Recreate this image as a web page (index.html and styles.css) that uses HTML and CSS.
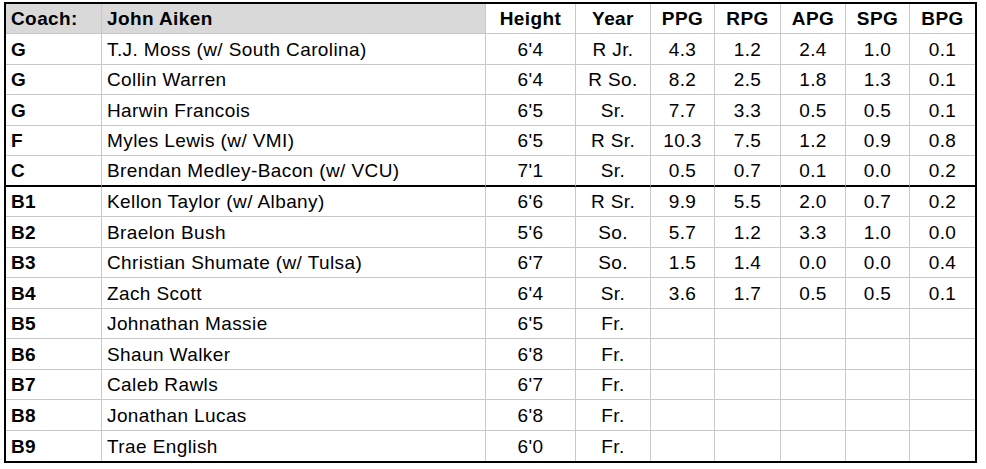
FILE: index.html
```html
<!DOCTYPE html>
<html lang="en">
<head>
<meta charset="utf-8">
<title>Roster</title>
<link rel="stylesheet" href="styles.css">
</head>
<body>
<table class="roster">
  <colgroup>
    <col class="c-pos"><col class="c-name"><col class="c-ht"><col class="c-yr">
    <col class="c-ppg"><col class="c-rpg"><col class="c-apg"><col class="c-spg"><col class="c-bpg">
  </colgroup>
  <thead>
    <tr>
      <th class="lbl">Coach:</th><th class="lbl">John Aiken</th><th>Height</th><th>Year</th>
      <th>PPG</th><th>RPG</th><th>APG</th><th>SPG</th><th>BPG</th>
    </tr>
  </thead>
  <tbody>
    <tr><td class="pos">G</td><td class="name">T.J. Moss (w/ South Carolina)</td><td>6'4</td><td>R Jr.</td><td>4.3</td><td>1.2</td><td>2.4</td><td>1.0</td><td>0.1</td></tr>
    <tr><td class="pos">G</td><td class="name">Collin Warren</td><td>6'4</td><td>R So.</td><td>8.2</td><td>2.5</td><td>1.8</td><td>1.3</td><td>0.1</td></tr>
    <tr><td class="pos">G</td><td class="name">Harwin Francois</td><td>6'5</td><td>Sr.</td><td>7.7</td><td>3.3</td><td>0.5</td><td>0.5</td><td>0.1</td></tr>
    <tr><td class="pos">F</td><td class="name">Myles Lewis (w/ VMI)</td><td>6'5</td><td>R Sr.</td><td>10.3</td><td>7.5</td><td>1.2</td><td>0.9</td><td>0.8</td></tr>
    <tr class="group-end"><td class="pos">C</td><td class="name">Brendan Medley-Bacon (w/ VCU)</td><td>7'1</td><td>Sr.</td><td>0.5</td><td>0.7</td><td>0.1</td><td>0.0</td><td>0.2</td></tr>
    <tr><td class="pos">B1</td><td class="name">Kellon Taylor (w/ Albany)</td><td>6'6</td><td>R Sr.</td><td>9.9</td><td>5.5</td><td>2.0</td><td>0.7</td><td>0.2</td></tr>
    <tr><td class="pos">B2</td><td class="name">Braelon Bush</td><td>5'6</td><td>So.</td><td>5.7</td><td>1.2</td><td>3.3</td><td>1.0</td><td>0.0</td></tr>
    <tr><td class="pos">B3</td><td class="name">Christian Shumate (w/ Tulsa)</td><td>6'7</td><td>So.</td><td>1.5</td><td>1.4</td><td>0.0</td><td>0.0</td><td>0.4</td></tr>
    <tr><td class="pos">B4</td><td class="name">Zach Scott</td><td>6'4</td><td>Sr.</td><td>3.6</td><td>1.7</td><td>0.5</td><td>0.5</td><td>0.1</td></tr>
    <tr><td class="pos">B5</td><td class="name">Johnathan Massie</td><td>6'5</td><td>Fr.</td><td></td><td></td><td></td><td></td><td></td></tr>
    <tr><td class="pos">B6</td><td class="name">Shaun Walker</td><td>6'8</td><td>Fr.</td><td></td><td></td><td></td><td></td><td></td></tr>
    <tr><td class="pos">B7</td><td class="name">Caleb Rawls</td><td>6'7</td><td>Fr.</td><td></td><td></td><td></td><td></td><td></td></tr>
    <tr><td class="pos">B8</td><td class="name">Jonathan Lucas</td><td>6'8</td><td>Fr.</td><td></td><td></td><td></td><td></td><td></td></tr>
    <tr><td class="pos">B9</td><td class="name">Trae English</td><td>6'0</td><td>Fr.</td><td></td><td></td><td></td><td></td><td></td></tr>
  </tbody>
</table>
</body>
</html>
```

FILE: styles.css
```css
body {
  margin: 0;
  background: #ffffff;
}

.roster {
  margin: 2px 0 0 4px;
  border: 2px solid #000000;
  border-spacing: 0;
  table-layout: fixed;
  width: 973px;
  font-family: "Liberation Sans", Arial, sans-serif;
  font-size: 19px;
  letter-spacing: 0.4px;
  color: #000000;
}

.c-pos { width: 96px; }
.c-name { width: 384px; }
.c-ht { width: 90px; }
.c-yr { width: 75px; }
.c-ppg { width: 64px; }
.c-rpg { width: 66px; }
.c-apg { width: 65px; }
.c-spg { width: 64px; }
.c-bpg { width: 65px; }

.roster th,
.roster td {
  box-sizing: border-box;
  padding: 0 5px 4px;
  line-height: 20px;
  vertical-align: bottom;
  text-align: center;
  white-space: nowrap;
  overflow: hidden;
  border-right: 1px solid #c8c8c8;
  border-bottom: 1px solid #c8c8c8;
}

.roster th {
  font-weight: bold;
}

.roster tr > :last-child {
  border-right: 0;
}

.roster tbody tr:last-child td {
  border-bottom: 0;
}

.roster thead tr { height: 30px; }
.roster tbody tr:nth-child(odd) { height: 31px; }
.roster tbody tr:nth-child(even) { height: 30px; }

.roster .lbl {
  background: #d9d9d9;
  text-align: left;
}

.roster .pos {
  font-weight: bold;
  text-align: left;
}

.roster .name {
  text-align: left;
}

.roster .group-end td {
  border-bottom: 2px solid #000000;
}
```
